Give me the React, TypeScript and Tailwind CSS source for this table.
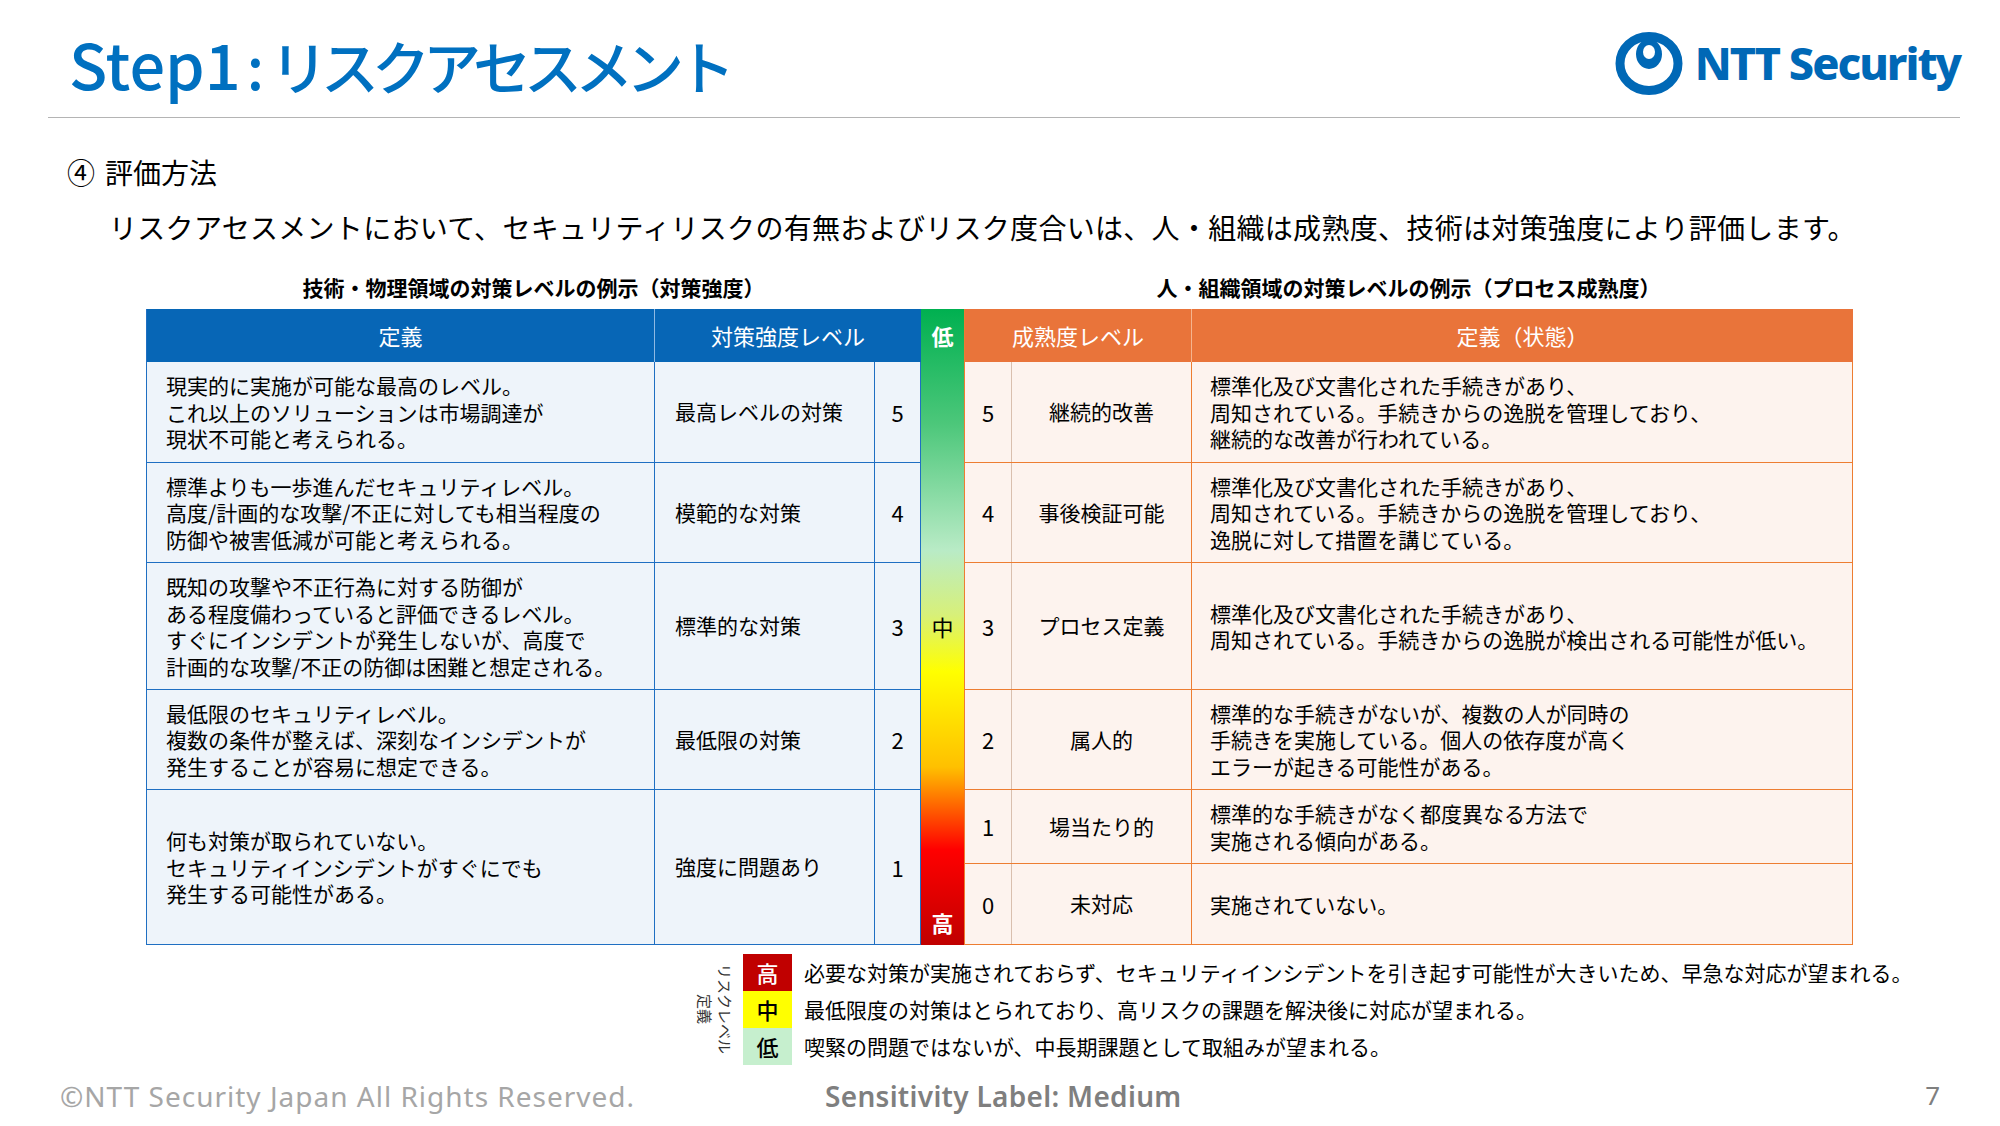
import React from "react";

interface LeftRow {
  lines: string[];
  label: string;
  level: number;
  h: string;
}

interface RightRow {
  lines: string[];
  label: string;
  level: number;
  h: string;
}

const leftRows: LeftRow[] = [
  {
    lines: [
      "現実的に実施が可能な最高のレベル。",
      "これ以上のソリューションは市場調達が",
      "現状不可能と考えられる。",
    ],
    label: "最高レベルの対策",
    level: 5,
    h: "h-[101px]",
  },
  {
    lines: [
      "標準よりも一歩進んだセキュリティレベル。",
      "高度/計画的な攻撃/不正に対しても相当程度の",
      "防御や被害低減が可能と考えられる。",
    ],
    label: "模範的な対策",
    level: 4,
    h: "h-[100px]",
  },
  {
    lines: [
      "既知の攻撃や不正行為に対する防御が",
      "ある程度備わっていると評価できるレベル。",
      "すぐにインシデントが発生しないが、高度で",
      "計画的な攻撃/不正の防御は困難と想定される。",
    ],
    label: "標準的な対策",
    level: 3,
    h: "h-[127px]",
  },
  {
    lines: [
      "最低限のセキュリティレベル。",
      "複数の条件が整えば、深刻なインシデントが",
      "発生することが容易に想定できる。",
    ],
    label: "最低限の対策",
    level: 2,
    h: "h-[100px]",
  },
  {
    lines: [
      "何も対策が取られていない。",
      "セキュリティインシデントがすぐにでも",
      "発生する可能性がある。",
    ],
    label: "強度に問題あり",
    level: 1,
    h: "h-[155px]",
  },
];

const rightRows: RightRow[] = [
  {
    level: 5,
    label: "継続的改善",
    lines: [
      "標準化及び文書化された手続きがあり、",
      "周知されている。手続きからの逸脱を管理しており、",
      "継続的な改善が行われている。",
    ],
    h: "h-[101px]",
  },
  {
    level: 4,
    label: "事後検証可能",
    lines: [
      "標準化及び文書化された手続きがあり、",
      "周知されている。手続きからの逸脱を管理しており、",
      "逸脱に対して措置を講じている。",
    ],
    h: "h-[100px]",
  },
  {
    level: 3,
    label: "プロセス定義",
    lines: [
      "標準化及び文書化された手続きがあり、",
      "周知されている。手続きからの逸脱が検出される可能性が低い。",
    ],
    h: "h-[127px]",
  },
  {
    level: 2,
    label: "属人的",
    lines: [
      "標準的な手続きがないが、複数の人が同時の",
      "手続きを実施している。個人の依存度が高く",
      "エラーが起きる可能性がある。",
    ],
    h: "h-[100px]",
  },
  {
    level: 1,
    label: "場当たり的",
    lines: ["標準的な手続きがなく都度異なる方法で", "実施される傾向がある。"],
    h: "h-[74px]",
  },
  {
    level: 0,
    label: "未対応",
    lines: ["実施されていない。"],
    h: "h-[81px]",
  },
];

const legend = [
  {
    mark: "高",
    box: "bg-[#c00000] text-white",
    text: "必要な対策が実施されておらず、セキュリティインシデントを引き起す可能性が大きいため、早急な対応が望まれる。",
  },
  {
    mark: "中",
    box: "bg-[#ffff00] text-black",
    text: "最低限度の対策はとられており、高リスクの課題を解決後に対応が望まれる。",
  },
  {
    mark: "低",
    box: "bg-[#c6efce] text-black",
    text: "喫緊の問題ではないが、中長期課題として取組みが望まれる。",
  },
];

const Logo = () => (
  <div className="flex items-center gap-[12px] text-[#0068b6]">
    <svg width="68" height="64" viewBox="0 0 68 64">
      <ellipse cx="34" cy="32.5" rx="29" ry="27" fill="none" stroke="#0068b6" strokeWidth="9" />
      <ellipse cx="34" cy="23" rx="13" ry="15" fill="#0068b6" />
      <ellipse cx="34" cy="21" rx="6" ry="7" fill="#ffffff" />
    </svg>
    <span className="font-['Noto_Sans',sans-serif] font-extrabold text-[45px] leading-none tracking-[-2px]">
      NTT Security
    </span>
  </div>
);

const LeftTable = () => (
  <div className="w-[775px] flex flex-col border-l border-[#1f6fc2]">
    <div className="h-[53px] flex bg-[#0766b6] text-white text-[22px]">
      <div className="w-[508px] flex items-center justify-center border-r border-[#8fb9e3]">定義</div>
      <div className="flex-1 flex items-center justify-center">対策強度レベル</div>
    </div>
    {leftRows.map((r) => (
      <div key={r.level} className={`${r.h} flex bg-[#eef4fa] border-b border-[#1f6fc2]`}>
        <div className="w-[508px] flex flex-col justify-center pl-[19px] border-r border-[#1f6fc2] text-[21px] leading-[26.5px]">
          {r.lines.map((l) => (
            <div key={l} className="whitespace-nowrap">
              {l}
            </div>
          ))}
        </div>
        <div className="w-[220px] flex items-center pl-[20px] border-r border-[#1f6fc2] text-[21px]">
          {r.label}
        </div>
        <div className="flex-1 flex items-center justify-center border-r border-[#1f6fc2] text-[22px]">
          {r.level}
        </div>
      </div>
    ))}
  </div>
);

const RiskBar = () => (
  <div className="w-[43px] h-[636px] flex flex-col bg-[linear-gradient(to_bottom,#00b050_0%,#4cc77a_18%,#b9ebc6_38%,#d7f07a_48%,#ffff00_57%,#ffc000_72%,#ff0000_85%,#c00000_100%)]">
    <div className="h-[53px] flex items-center justify-center text-white font-bold text-[22px]">低</div>
    <div className="h-[201px]" />
    <div className="h-[127px] flex items-center justify-center text-black text-[22px]">中</div>
    <div className="flex-1 flex items-end justify-center pb-[6px] text-white font-bold text-[22px]">高</div>
  </div>
);

const RightTable = () => (
  <div className="w-[889px] flex flex-col border-l border-[#ed7d31]">
    <div className="h-[53px] flex bg-[#e9743a] text-white text-[22px]">
      <div className="w-[227px] flex items-center justify-center border-r border-[#f5b58f]">成熟度レベル</div>
      <div className="flex-1 flex items-center justify-center">定義（状態）</div>
    </div>
    {rightRows.map((r) => (
      <div key={r.level} className={`${r.h} flex bg-[#fdf3ee] border-b border-[#ed7d31]`}>
        <div className="w-[47px] flex items-center justify-center border-r border-[#d9bfae] text-[22px]">
          {r.level}
        </div>
        <div className="w-[180px] flex items-center justify-center border-r border-[#ed7d31] text-[21px]">
          {r.label}
        </div>
        <div className="flex-1 flex flex-col justify-center pl-[18px] border-r border-[#ed7d31] text-[21px] leading-[26.5px]">
          {r.lines.map((l) => (
            <div key={l} className="whitespace-nowrap">
              {l}
            </div>
          ))}
        </div>
      </div>
    ))}
  </div>
);

export default function App() {
  return (
    <div className="w-[2000px] h-[1126px] bg-white text-black flex flex-col overflow-hidden font-['Noto_Sans_CJK_JP','Noto_Sans',sans-serif]">
      <div className="mx-[40px] ml-[48px] h-[118px] flex items-center justify-between pt-[8px] border-b border-[#b4b4b4]">
        <h1 className="pl-[21px] text-[58px] leading-none font-medium text-[#0070c0] whitespace-nowrap">
          <span className="text-[63px]">Step1</span>
          <span className="px-[6px]">:</span>
          <span className="tracking-[-0.12em]">リスクアセスメント</span>
        </h1>
        <Logo />
      </div>

      <div className="ml-[67px] mt-[36px] h-[36px] flex items-center gap-[10px] text-[28px] leading-[36px]">
        <span>④</span>
        <span>評価方法</span>
      </div>
      <p className="ml-[109px] mt-[19px] text-[28px] leading-[36px] tracking-[0.3px] whitespace-nowrap">
        リスクアセスメントにおいて、セキュリティリスクの有無およびリスク度合いは、人・組織は成熟度、技術は対策強度により評価します。
      </p>

      <div className="ml-[146px] mt-[28px] flex text-[21px] leading-[28px] font-bold">
        <div className="w-[775px] text-center">技術・物理領域の対策レベルの例示（対策強度）</div>
        <div className="w-[43px]" />
        <div className="w-[889px] text-center">人・組織領域の対策レベルの例示（プロセス成熟度）</div>
      </div>

      <div className="ml-[146px] mt-[8px] flex">
        <LeftTable />
        <RiskBar />
        <RightTable />
      </div>

      <div className="ml-[695px] mt-[9px] flex items-center">
        <div className="[writing-mode:vertical-rl] [text-orientation:sideways] text-center text-[15px] leading-[20px] text-[#333333] mr-[8px]">
          リスクレベル
          <br />
          定義
        </div>
        <div className="flex flex-col">
          {legend.map((g) => (
            <div key={g.mark} className="h-[37px] flex items-center">
              <div className={`w-[49px] h-full flex items-center justify-center text-[22px] font-medium ${g.box}`}>
                {g.mark}
              </div>
              <div className="ml-[12px] text-[21px] whitespace-nowrap">{g.text}</div>
            </div>
          ))}
        </div>
      </div>

      <div className="flex-1 flex items-center font-['Noto_Sans',sans-serif]">
        <div className="ml-[60px] w-[765px] text-[28px] tracking-[1px] text-[#a6a6a6] whitespace-nowrap">
          ©NTT Security Japan All Rights Reserved.
        </div>
        <div className="flex-1 text-[28px] font-semibold text-[#7f7f7f] tracking-[0.3px] whitespace-nowrap">
          Sensitivity Label: Medium
        </div>
        <div className="mr-[60px] text-[26px] text-[#7f7f7f]">7</div>
      </div>
    </div>
  );
}
